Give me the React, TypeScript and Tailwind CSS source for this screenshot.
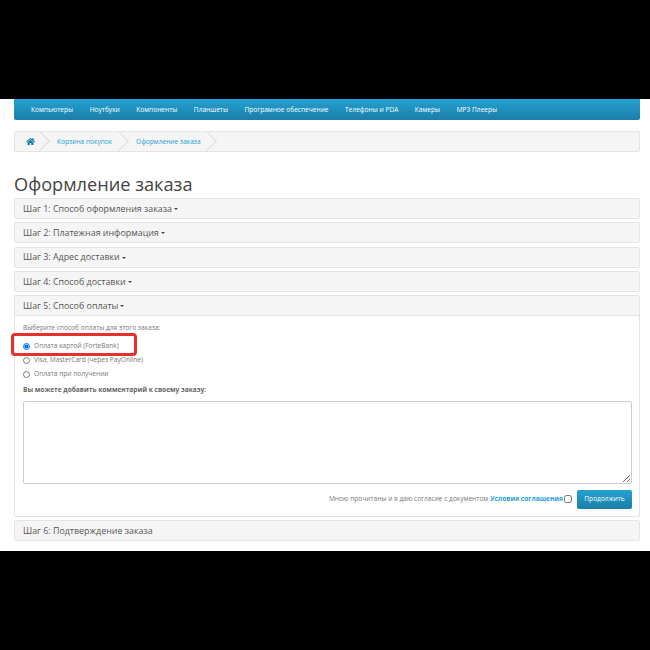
import { FaHome } from "react-icons/fa";

const navItems = [
  "Компьютеры",
  "Ноутбуки",
  "Компоненты",
  "Планшеты",
  "Програмное обеспечение",
  "Телефоны и PDA",
  "Камеры",
  "MP3 Плееры",
];

const StepHead = ({ title, caret = true }: { title: string; caret?: boolean }) => (
  <div className="h-[19px] flex items-center gap-[2px] px-[8px] bg-[#f5f5f5] text-[#555] text-[8.9px]">
    <span>{title}</span>
    {caret && (
      <span className="w-0 h-0 border-x-[2.5px] border-x-transparent border-t-[2.5px] border-t-[#444] mt-px" />
    )}
  </div>
);

const Crumb = ({ children, className }: { children: React.ReactNode; className: string }) => (
  <div className={`relative h-full flex items-center ${className}`}>
    {children}
    <span className="absolute right-[3px] top-[2px] w-[14px] h-[14px] rotate-45 border-t border-r border-[#ddd]" />
  </div>
);

const App = () => {
  return (
    <div className="w-[650px] h-[650px] flex flex-col bg-black font-['Open_Sans',sans-serif]">
      <div className="h-[99px] shrink-0" />
      <div className="relative h-[452px] shrink-0 bg-white pl-[14px] pr-[10px] overflow-hidden">
        {/* menu */}
        <div className="h-[21px] flex items-center gap-[16.5px] pl-[17px] rounded-b-[2px] bg-gradient-to-b from-[#23a1d1] to-[#1b7ea8] text-white text-[6.6px]">
          {navItems.map((n) => (
            <span key={n}>{n}</span>
          ))}
        </div>

        {/* breadcrumb */}
        <div className="mt-[11px] h-[21px] flex border border-[#e4e4e4] rounded-[2px] bg-[#f5f5f5] overflow-hidden text-[6.6px] text-[#23a1d1]">
          <Crumb className="w-[35px] pl-[11px]">
            <FaHome size={9} className="text-[#1b7ea8]" />
          </Crumb>
          <Crumb className="w-[79px] pl-[7px]">Корзина покупок</Crumb>
          <Crumb className="w-[88px] pl-[7px]">Оформление заказа</Crumb>
        </div>

        <h1 className="mt-[19px] mb-[1px] h-[26px] text-[18.2px] leading-[26px] text-[#444]">Оформление заказа</h1>

        <div className="flex flex-col gap-[3.3px]">
          {["Шаг 1: Способ оформления заказа", "Шаг 2: Платежная информация", "Шаг 3: Адрес доставки", "Шаг 4: Способ доставки"].map((t) => (
            <div key={t} className="border border-[#e4e4e4] rounded-[2px] overflow-hidden">
              <StepHead title={t} />
            </div>
          ))}

          <div className="border border-[#e4e4e4] rounded-[2px] overflow-hidden">
            <div className="border-b border-[#e4e4e4]">
              <StepHead title="Шаг 5: Способ оплаты" />
            </div>
            <div className="h-[200px] pl-[8px] pr-[7px] pt-[7px] text-[6.6px] text-[#777]">
              <p className="leading-[10px]">Выберите способ оплаты для этого заказа:</p>
              <div className="mt-[8px] flex flex-col gap-[4px]">
                {["Оплата картой (ForteBank)", "Visa, MasterCard (через PayOnline)", "Оплата при получении"].map((o, i) => (
                  <label key={o} className="h-[10px] flex items-center gap-[4px]">
                    <input type="radio" name="pay" defaultChecked={i === 0} className="w-[7px] h-[7px] m-0 accent-[#0075ff]" />
                    <span>{o}</span>
                  </label>
                ))}
              </div>
              <p className="mt-[5.5px] leading-[10px] font-bold text-[#666]">Вы можете добавить комментарий к своему заказу:</p>
              <textarea className="block mt-[6px] w-full h-[83px] border border-[#ccc] rounded-[2px] bg-white" />
              <div className="mt-[6px] flex items-center justify-end">
                <span>Мною прочитаны и я даю согласие с документом </span>
                <span className="ml-[2px] font-bold text-[#23a1d1]">Условия соглашения</span>
                <input type="checkbox" className="w-[8px] h-[8px] m-0 ml-px mb-px" />
                <button className="ml-[5px] w-[55px] h-[19px] rounded-[2px] bg-gradient-to-b from-[#23a1d1] to-[#1b7ea8] text-white text-[6.6px]">
                  Продолжить
                </button>
              </div>
            </div>
          </div>

          <div className="border border-[#e4e4e4] rounded-[2px] overflow-hidden">
            <StepHead title="Шаг 6: Подтверждение заказа" caret={false} />
          </div>
        </div>

        {/* red highlight */}
        <div className="absolute left-[11px] top-[234px] w-[126px] h-[23px] border-[3px] border-[#e8302a] rounded-[4px]" />
      </div>
      <div className="h-[99px] shrink-0" />
    </div>
  );
};

export default App;
